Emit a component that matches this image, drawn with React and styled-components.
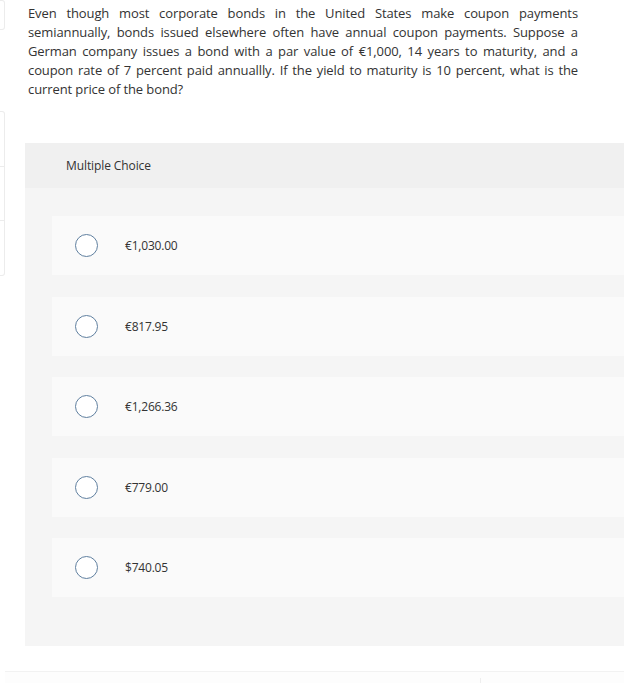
import React from 'react';
import styled, { createGlobalStyle } from 'styled-components';

const GlobalStyle = createGlobalStyle`
  html, body {
    margin: 0;
    padding: 0;
    background: #ffffff;
    font-family: 'Open Sans', 'Liberation Sans', sans-serif;
    color: #333333;
  }
`;

const Page = styled.div`
  display: flex;
  width: 624px;
  height: 683px;
  overflow: hidden;
`;

const Sidebar = styled.div`
  width: 5px;
  flex-shrink: 0;
  display: flex;
  flex-direction: column;
`;

const SideBox = styled.div`
  height: ${(p) => p.h}px;
  margin-top: ${(p) => p.top || 0}px;
  border: 1px solid #ececec;
  border-left: none;
  border-radius: 0 3px 3px 0;
  display: flex;
  flex-direction: column;
`;

const SideRow = styled.div`
  flex: 1;
  & + & {
    border-top: 1px solid #ececec;
  }
`;

const Main = styled.div`
  flex: 1;
  display: flex;
  flex-direction: column;
`;

const Question = styled.div`
  padding: 4px 46px 0 23px;
  font-size: 13px;
  line-height: 19px;
  letter-spacing: -0.1px;
  color: #333333;
`;

const Line = styled.span`
  display: block;
  white-space: nowrap;
  text-align: ${(p) => (p.last ? 'left' : 'justify')};
  text-align-last: ${(p) => (p.last ? 'left' : 'justify')};
`;

const Panel = styled.div`
  margin: 44px 0 0 20px;
  background: #f5f5f5;
`;

const PanelHeader = styled.div`
  height: 45px;
  display: flex;
  align-items: center;
  padding-left: 41px;
  background: #f0f0f0;
  font-size: 12px;
  letter-spacing: -0.1px;
  color: #333333;
`;

const Choices = styled.div`
  display: flex;
  flex-direction: column;
  gap: 21.5px;
  padding: 28px 0 49px 27px;
`;

const Choice = styled.div`
  height: 59px;
  display: flex;
  align-items: center;
  gap: 27px;
  padding-left: 23px;
  background: #fafafa;
  font-size: 12px;
  letter-spacing: -0.2px;
  color: #333333;
  cursor: pointer;
`;

const Radio = styled.span`
  width: 21px;
  height: 21px;
  border-radius: 50%;
  border: 1.5px solid #5f7f9f;
  background: #ffffff;
  flex-shrink: 0;
`;

const Footer = styled.div`
  margin-top: 25px;
  flex: 1;
  border-top: 1px solid #f2f2f2;
  background: #fdfdfd;
  display: flex;
  justify-content: flex-end;
  padding-right: 143px;
`;

const Tick = styled.span`
  width: 1px;
  height: 6px;
  margin-top: 6px;
  background: #eeeeee;
`;

const questionLines = [
  'Even though most corporate bonds in the United States make coupon payments',
  'semiannually, bonds issued elsewhere often have annual coupon payments. Suppose a',
  'German company issues a bond with a par value of €1,000, 14 years to maturity, and a',
  'coupon rate of 7 percent paid annuallly. If the yield to maturity is 10 percent, what is the',
  'current price of the bond?',
];

const options = ['€1,030.00', '€817.95', '€1,266.36', '€779.00', '$740.05'];

export default function App() {
  return (
    <>
      <GlobalStyle />
      <Page>
        <Sidebar>
          <SideBox h={28} />
          <SideBox h={163} top={81}>
            <SideRow />
            <SideRow />
            <SideRow />
          </SideBox>
        </Sidebar>
        <Main>
          <Question>
            {questionLines.map((l, i) => (
              <Line key={i} last={i === questionLines.length - 1}>
                {l}
              </Line>
            ))}
          </Question>
          <Panel>
            <PanelHeader>Multiple Choice</PanelHeader>
            <Choices>
              {options.map((o) => (
                <Choice key={o}>
                  <Radio />
                  <span>{o}</span>
                </Choice>
              ))}
            </Choices>
          </Panel>
          <Footer>
            <Tick />
          </Footer>
        </Main>
      </Page>
    </>
  );
}
